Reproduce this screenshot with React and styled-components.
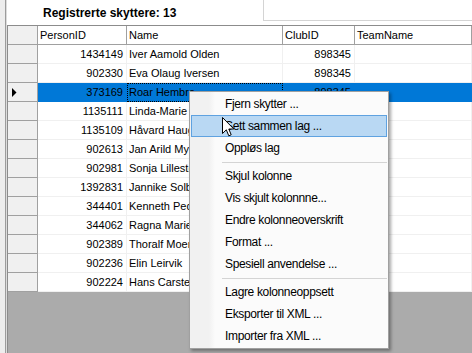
import styled, { createGlobalStyle } from "styled-components";

const GlobalStyle = createGlobalStyle`
  html, body {
    margin: 0;
    padding: 0;
    background: #fff;
    overflow: hidden;
  }
  body {
    font-family: "Liberation Sans", Arial, sans-serif;
    font-size: 11px;
    color: #000;
  }
`;

const columns = [
  { key: "id", title: "PersonID", width: 89, align: "right" },
  { key: "name", title: "Name", width: 156, align: "left" },
  { key: "club", title: "ClubID", width: 72, align: "right" },
  { key: "team", title: "TeamName", width: 0, align: "left" },
];

// rows below the third are covered by the menu in the ClubID column
const rows = [
  { id: "1434149", name: "Iver Aamold Olden", club: "898345" },
  { id: "902330", name: "Eva Olaug Iversen", club: "898345" },
  { id: "373169", name: "Roar Hembre", club: "898345" },
  { id: "1135111", name: "Linda-Marie" },
  { id: "1135109", name: "Håvard  Haugen" },
  { id: "902613", name: "Jan Arild Myhre" },
  { id: "902981", name: "Sonja Lillestøl" },
  { id: "1392831", name: "Jannike Solberg" },
  { id: "344401", name: "Kenneth Pedersen" },
  { id: "344062", name: "Ragna Marie" },
  { id: "902389", name: "Thoralf Moen" },
  { id: "902236", name: "Elin Leirvik" },
  { id: "902224", name: "Hans Carsten" },
];

const menuItems = [
  { label: "Fjern skytter ..." },
  { label: "Sett sammen lag ...", hover: true },
  { label: "Oppløs lag" },
  { sep: true },
  { label: "Skjul kolonne" },
  { label: "Vis skjult kolonnne..." },
  { label: "Endre kolonneoverskrift" },
  { label: "Format ..." },
  { label: "Spesiell anvendelse ..." },
  { sep: true },
  { label: "Lagre kolonneoppsett" },
  { label: "Eksporter til XML ..." },
  { label: "Importer fra XML ..." },
];

const Window = styled.div`
  position: relative;
  display: flex;
  width: 472px;
  height: 353px;
  overflow: hidden;
`;

const SideStrip = styled.div`
  width: 5px;
  background: #ededed;
  border-right: 1px solid #9c9c9c;
  box-shadow: 1px 0 0 #dcdcdc;
  margin-right: 1px;
`;

const Main = styled.div`
  flex: 1;
  display: flex;
  flex-direction: column;
  min-width: 0;
`;

const TopBar = styled.div`
  height: 25px;
  display: flex;
  align-items: flex-start;
  background: #fff;
`;

const Title = styled.div`
  padding: 6px 0 0 36px;
  font-weight: bold;
  font-size: 12px;
  line-height: 14px;
`;

const InputBox = styled.div`
  margin-left: auto;
  width: 208px;
  height: 20px;
  border-left: 1px solid #d4d4d4;
  border-bottom: 1px solid #d4d4d4;
`;

const Grid = styled.div`
  flex: 1;
  background: #ababab;
  border-top: 1px solid #8c8c8c;
  border-left: 1px solid #8c8c8c;
`;

const Row = styled.div`
  display: flex;
  height: 19px;
`;

const RowHeader = styled.div`
  width: 30px;
  flex: none;
  box-sizing: border-box;
  height: 19px;
  background: #f0f0f0;
  border-right: 1px solid #a0a0a0;
  border-bottom: 1px solid #a0a0a0;
  display: flex;
  align-items: center;
  padding-left: 4px;
`;

const HeaderCell = styled.div`
  width: ${(p) => (p.$w ? `${p.$w}px` : "auto")};
  flex: ${(p) => (p.$w ? "none" : "1")};
  box-sizing: border-box;
  height: 19px;
  line-height: 18px;
  padding-left: 2px;
  background: #fff;
  border-right: 1px solid #a0a0a0;
  border-bottom: 1px solid #a0a0a0;
  white-space: nowrap;
  overflow: hidden;
`;

const Cell = styled.div`
  position: relative;
  width: ${(p) => (p.$w ? `${p.$w}px` : "auto")};
  flex: ${(p) => (p.$w ? "none" : "1")};
  box-sizing: border-box;
  height: 19px;
  line-height: 18px;
  padding: 0 3px 0 2px;
  text-align: ${(p) => p.$align};
  background: ${(p) => (p.$selected ? "#0078d7" : "#fff")};
  border-right: 1px solid ${(p) => (p.$selected ? "#0078d7" : "#f0f0f0")};
  border-bottom: 1px solid ${(p) => (p.$selected ? "#0078d7" : "#f0f0f0")};
  white-space: nowrap;
  overflow: hidden;
  outline: ${(p) => (p.$focus ? "1px dotted #000" : "none")};
  outline-offset: -1px;
`;

const Menu = styled.div`
  position: absolute;
  left: 189px;
  top: 91px;
  width: 200px;
  box-sizing: border-box;
  padding: 1px;
  border: 1px solid #a0a0a0;
  background: linear-gradient(to right, #f1f1f1 0, #f1f1f1 19px, #fbfbfb 25px, #fbfbfb 100%);
  box-shadow: 2px 2px 3px rgba(0, 0, 0, 0.35);
  font-size: 12px;
`;

const MenuItem = styled.div`
  height: 22px;
  box-sizing: border-box;
  line-height: 20px;
  padding-left: 33px;
  border: 1px solid ${(p) => (p.$hover ? "#5fa2e0" : "transparent")};
  background: ${(p) => (p.$hover ? "#b9d8f3" : "transparent")};
  white-space: nowrap;
  letter-spacing: -0.35px;
`;

const Separator = styled.div`
  height: 6px;
  display: flex;
  align-items: center;
  padding-left: 31px;
  &::after {
    content: "";
    flex: 1;
    height: 1px;
    background: #d4d4d4;
  }
`;

const Cursor = styled.svg`
  position: absolute;
  left: 222px;
  top: 117px;
`;

function App() {
  return (
    <>
      <GlobalStyle />
      <Window>
        <SideStrip />
        <Main>
          <TopBar>
            <Title>Registrerte skyttere: 13</Title>
            <InputBox />
          </TopBar>
          <Grid>
            <Row>
              <RowHeader />
              {columns.map((c) => (
                <HeaderCell key={c.key} $w={c.width}>
                  {c.title}
                </HeaderCell>
              ))}
            </Row>
            {rows.map((r, i) => {
              const selected = i === 2;
              return (
                <Row key={r.id}>
                  <RowHeader>
                    {selected && (
                      <svg width="5" height="9" viewBox="0 0 5 9">
                        <path d="M0 0 L4.5 4.5 L0 9 Z" fill="#000" />
                      </svg>
                    )}
                  </RowHeader>
                  {columns.map((c) => (
                    <Cell
                      key={c.key}
                      $w={c.width}
                      $align={c.align}
                      $selected={selected}
                      $focus={selected && c.key === "name"}
                    >
                      {r[c.key] || ""}
                    </Cell>
                  ))}
                </Row>
              );
            })}
          </Grid>
        </Main>

        <Menu>
          {menuItems.map((m, i) =>
            m.sep ? (
              <Separator key={i} />
            ) : (
              <MenuItem key={i} $hover={m.hover}>
                {m.label}
              </MenuItem>
            )
          )}
        </Menu>

        <Cursor width="13" height="21" viewBox="0 0 13 21">
          <path
            d="M0.5 0.5 L0.5 16.5 L4.3 12.8 L6.8 18.8 L9.2 17.8 L6.8 12 L11.8 12 Z"
            fill="#fff"
            stroke="#000"
            strokeWidth="1"
            strokeLinejoin="miter"
          />
        </Cursor>
      </Window>
    </>
  );
}

export default App;
